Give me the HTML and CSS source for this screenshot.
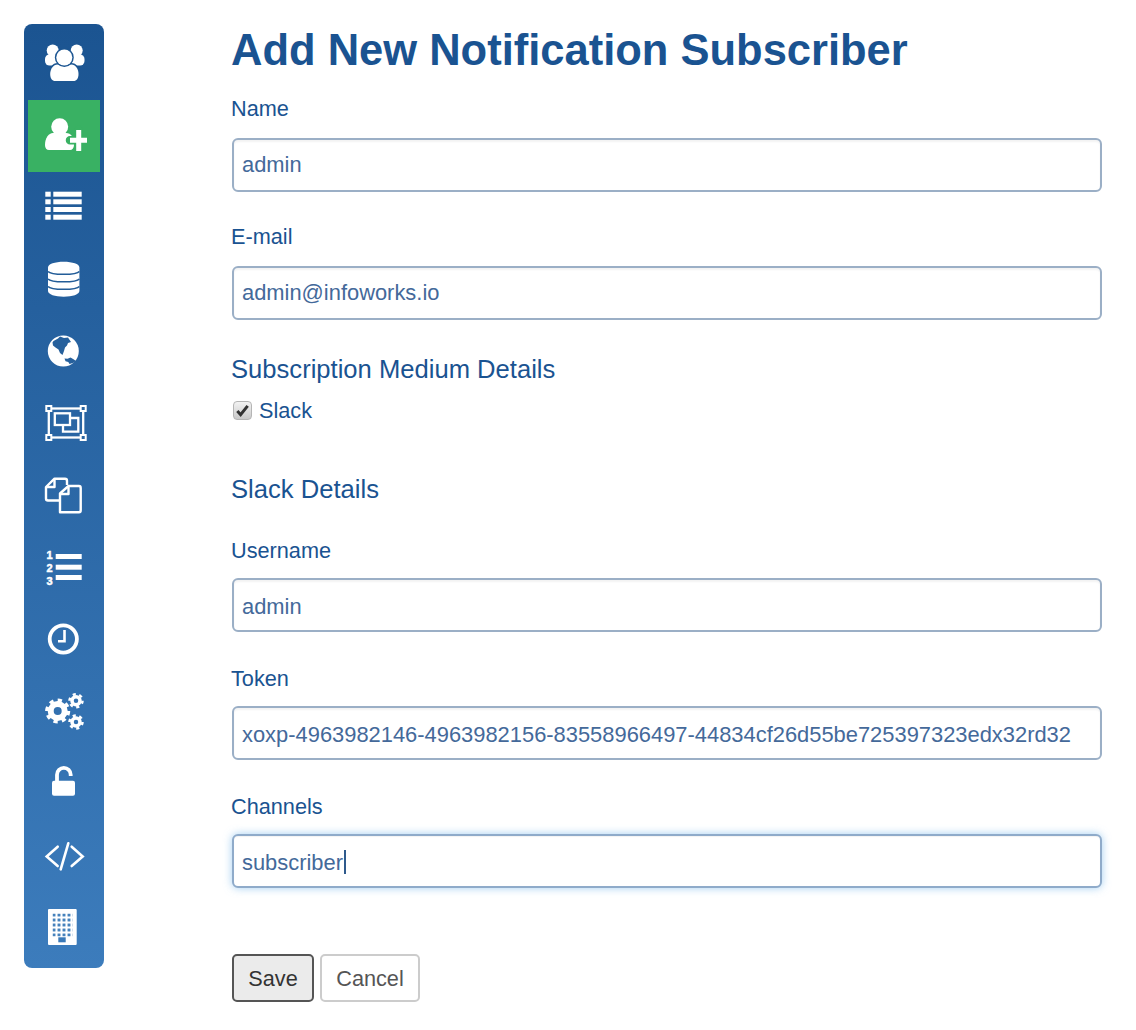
FILE: index.html
```html
<!DOCTYPE html>
<html lang="en">
<head>
<meta charset="utf-8">
<title>Add New Notification Subscriber</title>
<link rel="stylesheet" href="styles.css">
</head>
<body>
<div class="page">
  <nav class="sidebar">
    <a class="nav-item tone-1"><svg class="icon" viewBox="0 0 48 48"><circle cx="12.7" cy="10.500" r="6"/><circle cx="36.7" cy="10.500" r="6"/><rect x="5" y="14.500" width="14" height="11" rx="4.500"/><rect x="30" y="14.500" width="14.500" height="11" rx="4.500"/><path class="halo" d="M10.200 34c0-5 3-9.500 7.500-9.500h13.500c4.500 0 7.300 4.500 7.300 9.500 0 4.500-2 7-5 7H15.200c-3 0-5-2.500-5-7z"/><circle class="halo" cx="24.300" cy="17.500" r="8"/></svg></a>
    <a class="nav-item is-active"><svg class="icon" viewBox="0 0 48 48"><circle cx="19.700" cy="14.700" r="8.500"/><path d="M5 33c0-7 3.500-12 8-12h13c5 0 8 4 8 12 0 3-2 5-4 5H9c-2.500 0-4-2-4-5z"/><path class="plus-halo" d="M38.700 18v21M30 28.300h17"/><path class="plus" d="M38.700 18v21M30 28.300h17"/></svg></a>
    <a class="nav-item"><svg class="icon" viewBox="0 0 48 48"><rect x="5.300" y="7.700" width="5.400" height="5"/><rect x="13.300" y="7.700" width="28.400" height="5"/><rect x="5.300" y="15.300" width="5.400" height="5"/><rect x="13.300" y="15.300" width="28.400" height="5"/><rect x="5.300" y="23" width="5.400" height="5"/><rect x="13.300" y="23" width="28.400" height="5"/><rect x="5.300" y="30.700" width="5.400" height="5"/><rect x="13.300" y="30.700" width="28.400" height="5"/></svg></a>
    <a class="nav-item tone-2"><svg class="icon" viewBox="0 0 48 48"><path d="M8 11.500c0-3.500 7-5.700 15.700-5.700s15.700 2.200 15.700 5.700v23.500c0 3.500-7 5.700-15.700 5.700S8 38.500 8 35z"/><path class="cut-line" d="M8 15.500c3 3.800 28.400 3.800 31.400 0M8 23c3 3.800 28.400 3.800 31.400 0M8 30.500c3 3.800 28.400 3.800 31.400 0"/></svg></a>
    <a class="nav-item tone-3"><svg class="icon" viewBox="0 0 48 48"><circle cx="23.300" cy="23" r="15.500"/><path class="cut" d="M13.500 13 18 10.500l2-2 4 1.500 4-.5 3 4.500-3 1-1 2.500-2 2-1 3.500-1.500 4-2.500-2-1.500-3.500-3-2-2.500-2-.5-3z"/><path class="cut" d="M24.500 30.500l3 .3 3-1.300 3 1.800 2.500 1.700-2.500 1.700-4 1.300-1.200-2-2.800-.8z"/></svg></a>
    <a class="nav-item tone-4"><svg class="icon outline frame" viewBox="0 0 48 48"><rect x="8.800" y="8.500" width="34.400" height="29"/><rect x="14.800" y="13.300" width="15.200" height="11.700"/><path d="M30 18h8.300v13.700H23V25"/><rect class="corner" x="6.300" y="6" width="5" height="5"/><rect class="corner" x="40.700" y="6" width="5" height="5"/><rect class="corner" x="6.300" y="35" width="5" height="5"/><rect class="corner" x="40.700" y="35" width="5" height="5"/></svg></a>
    <a class="nav-item"><svg class="icon outline files" viewBox="0 0 48 48"><path d="M19 28.500H8c-1.500 0-2-.7-2-2V15l8.500-8.300H25c1 0 2 .7 2 2V13"/><path d="M14.500 7v8H6"/><path d="M20 40.300V21.500L28.500 14H39c1 0 1.700.7 1.700 2v22.300c0 1.300-.7 2-1.700 2z"/><path d="M28.500 14v8H20"/></svg></a>
    <a class="nav-item"><svg class="icon" viewBox="0 0 48 48"><text class="num" x="9.500" y="15.200">1</text><text class="num" x="9.500" y="28">2</text><text class="num" x="9.500" y="41">3</text><rect x="15.700" y="10" width="26" height="5"/><rect x="15.700" y="20.700" width="26" height="5"/><rect x="15.700" y="31" width="26" height="5"/></svg></a>
    <a class="nav-item"><svg class="icon outline thick" viewBox="0 0 48 48"><circle cx="23.300" cy="23" r="13.600"/><path class="hand" d="M24.500 14v11.300H18"/></svg></a>
    <a class="nav-item"><svg class="icon gears" viewBox="0 0 48 48"><circle class="ring" cx="17.700" cy="23" r="7"/><circle class="teeth" cx="17.700" cy="23" r="10.800" pathLength="48"/><circle class="ring-small" cx="36" cy="12.700" r="4"/><circle class="teeth-small" cx="36" cy="12.700" r="6.500" pathLength="32"/><circle class="ring-small" cx="36" cy="34" r="4"/><circle class="teeth-small" cx="36" cy="34" r="6.500" pathLength="32"/></svg></a>
    <a class="nav-item"><svg class="icon" viewBox="0 0 48 48"><rect x="12" y="20.700" width="23" height="15" rx="2"/><path class="shackle" d="M17 21v-6.200a6.850 6.850 0 0 1 13.700 0v1.200"/></svg></a>
    <a class="nav-item"><svg class="icon outline code" viewBox="0 0 48 48"><path d="M17.700 14.700 6.700 24.500 17.700 34M28.300 11.300 20.700 37.300M31.700 14.700 42.700 24.500 31.700 34"/></svg></a>
    <a class="nav-item tone-5"><svg class="icon" viewBox="0 0 48 48"><defs><pattern id="win" x="12.500" y="9.500" width="5" height="5" patternUnits="userSpaceOnUse"><rect class="cut" width="3" height="3" rx="1"/></pattern></defs><rect x="8" y="5" width="28.700" height="36" rx="1"/><rect class="windows" x="12.500" y="9.500" width="20" height="23"/><rect class="cut" x="18.300" y="33.300" width="7.400" height="5"/></svg></a>
  </nav>

  <main class="content">
    <h1 class="title">Add New Notification Subscriber</h1>
    <form class="form">
      <div class="field">
        <label class="field-label" for="name">Name</label>
        <input class="input" id="name" type="text" value="admin">
      </div>
      <div class="field">
        <label class="field-label" for="email">E-mail</label>
        <input class="input" id="email" type="text" value="admin@infoworks.io">
      </div>
      <h2 class="section-title">Subscription Medium Details</h2>
      <label class="check-row">
        <span class="check-box"><svg class="check-mark" viewBox="0 0 16 16"><path d="M2.500 8.500 6 12.500 13.500 3"/></svg></span>
        <span class="check-text">Slack</span>
      </label>
      <h2 class="section-title section-title-slack">Slack Details</h2>
      <div class="field field-low">
        <label class="field-label" for="username">Username</label>
        <input class="input" id="username" type="text" value="admin">
      </div>
      <div class="field field-low">
        <label class="field-label" for="token">Token</label>
        <input class="input" id="token" type="text" value="xoxp-4963982146-4963982156-83558966497-44834cf26d55be725397323edx32rd32">
      </div>
      <div class="field field-low field-last">
        <label class="field-label" for="channels">Channels</label>
        <div class="input-wrap">
          <input class="input is-focused" id="channels" type="text" value="subscriber">
          <span class="caret"></span>
        </div>
      </div>
      <div class="actions">
        <button class="btn btn-save" type="button">Save</button>
        <button class="btn btn-cancel" type="button">Cancel</button>
      </div>
    </form>
  </main>
</div>
</body>
</html>
```
FILE: styles.css
```css
* { box-sizing: border-box; }
html, body { margin: 0; padding: 0; background: #fff; }
body { font-family: "Liberation Sans", Arial, sans-serif; color: #1a5391; }

.page { display: flex; align-items: flex-start; padding: 24px 34px 0 24px; }

.sidebar {
  width: 80px;
  flex: none;
  padding: 4px;
  border-radius: 8px;
  background: linear-gradient(to bottom, #1b5491, #3c7cbc);
  display: flex;
  flex-direction: column;
}
.nav-item { height: 72px; display: flex; align-items: center; justify-content: center; --cut: #1d5692; }
.nav-item.is-active { background: #39b163; }
.tone-2 { --cut: #235d98; }
.tone-3 { --cut: #26609c; }
.tone-4 { --cut: #2a65a2; }
.tone-5 { --cut: #3a79b8; }

.icon { width: 48px; height: 48px; display: block; fill: #fff; }
.icon .cut { fill: var(--cut); stroke: none; }
.icon .cut-line { fill: none; stroke: var(--cut); stroke-width: 1.500; }
.icon .halo { fill: #fff; stroke: var(--cut); stroke-width: 3; paint-order: stroke; }
.outline { fill: none; stroke: #fff; stroke-width: 2; }
.frame { stroke-width: 2.300; }
.outline .corner { fill: var(--cut); stroke: #fff; stroke-width: 2; }
.files { stroke-width: 2.400; stroke-linejoin: round; }
.thick { stroke-width: 3.800; }
.thick .hand { stroke-width: 2.600; }
.code { stroke-width: 2.600; stroke-linecap: round; }
.plus-halo { fill: none; stroke: #39b163; stroke-width: 8.500; stroke-linecap: round; }
.plus { fill: none; stroke: #fff; stroke-width: 5; }
.shackle { fill: none; stroke: #fff; stroke-width: 3.800; }
.num { font: bold 11px "Liberation Sans", Arial, sans-serif; text-anchor: middle; fill: #fff; stroke: #fff; stroke-width: .5; }
.gears circle { fill: none; stroke: #fff; }
.gears .ring { stroke-width: 6; }
.gears .teeth { stroke-width: 3.500; stroke-dasharray: 3 3; }
.gears .ring-small { stroke-width: 3.500; }
.gears .teeth-small { stroke-width: 2.500; stroke-dasharray: 2.500 2.833; }
.windows { fill: url(#win); }

.content { flex: 1; margin-left: 128px; min-width: 0; }
.title { margin: 0 0 20px -1px; padding-top: 1px; font-size: 43.500px; line-height: 50px; font-weight: 700; color: #1a5391; }

.form { display: block; margin: 0; }
.field { margin-bottom: 31px; }
.field-label { display: block; margin: 0 0 15px -1px; font-size: 21.700px; line-height: 28px; }
.field-low { margin-bottom: 33px; }
.field-low .field-label { margin-bottom: 13px; }
.field-low .input { padding-top: 4px; }
.field-last { margin-bottom: 0; }
.input-wrap { position: relative; }
.input {
  display: block;
  width: 100%;
  height: 54px;
  padding: 0 8px;
  border: 2px solid #9bafc6;
  border-radius: 6px;
  background: #fff;
  color: #44699a;
  font-family: "Liberation Sans", Arial, sans-serif;
  font-size: 21.900px;
  box-shadow: inset 0 2px 2px rgba(0, 0, 0, .05);
  outline: none;
}
.input.is-focused { border-color: #8fabca; box-shadow: inset 0 1px 1px rgba(0, 0, 0, .05), 0 0 8px rgba(102, 175, 233, .6); }
.caret { position: absolute; left: 112px; top: 16px; width: 2px; height: 24px; background: #2f5a8c; }

.section-title { margin: 1px 0 -1px -1px; font-size: 25.600px; line-height: 36px; font-weight: 400; color: #1a5391; }
.check-row { display: flex; align-items: center; gap: 7px; height: 24px; margin-top: 12px; font-size: 21.700px; }
.check-text { padding-top: 2px; }
.check-box {
  width: 19px;
  height: 19px;
  margin-left: 1px;
  border: 1px solid #b5b5b5;
  border-radius: 4px;
  background: linear-gradient(to bottom, #f3f3f3, #c9c9c9);
  display: flex;
  align-items: center;
  justify-content: center;
}
.check-mark { width: 15px; height: 15px; fill: none; stroke: #333; stroke-width: 3.200; }
.section-title-slack { margin-top: 49px; margin-bottom: 30px; }

.actions { display: flex; gap: 6px; margin-top: 66px; }
.btn {
  height: 48px;
  border-radius: 5px;
  font-family: "Liberation Sans", Arial, sans-serif;
  font-size: 21.700px;
  padding: 2px 0 0;
}
.btn-save { width: 82px; background: #ebebeb; border: 2px solid #555; color: #333; }
.btn-cancel { width: 100px; background: #fff; border: 2px solid #ccc; color: #555; }
```
